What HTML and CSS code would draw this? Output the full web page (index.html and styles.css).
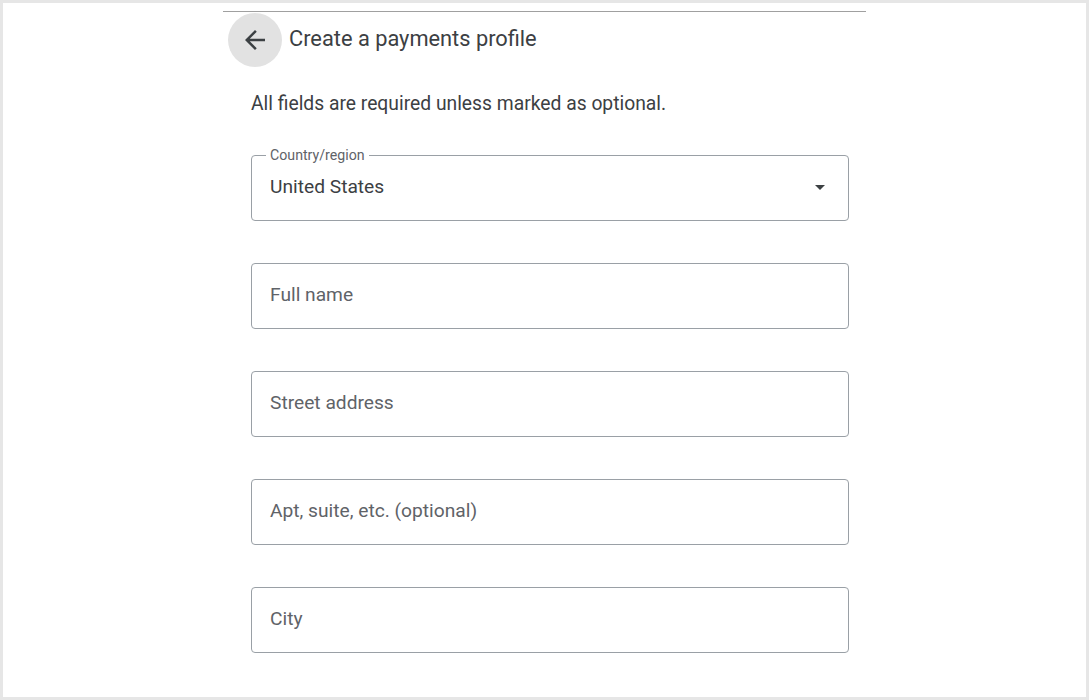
FILE: index.html
```html
<!DOCTYPE html>
<html lang="en">
<head>
<meta charset="utf-8">
<title>Create a payments profile</title>
<link rel="stylesheet" href="styles.css">
</head>
<body>
<div class="frame">
  <div class="column">
    <div class="header">
      <button class="back" aria-label="Back">
        <svg width="30" height="30" viewBox="0 0 24 24"><path d="M20 11H7.83l5.59-5.59L12 4l-8 8 8 8 1.41-1.41L7.83 13H20v-2z" fill="#3c4043"/></svg>
      </button>
      <h1 class="title">Create a payments profile</h1>
    </div>
    <div class="body">
      <p class="note">All fields are required unless marked as optional.</p>
      <div class="fields">
        <div class="field select">
          <span class="label">Country/region</span>
          <span class="value">United States</span>
          <span class="caret"></span>
        </div>
        <div class="field"><span class="placeholder">Full name</span></div>
        <div class="field"><span class="placeholder">Street address</span></div>
        <div class="field"><span class="placeholder">Apt, suite, etc. (optional)</span></div>
        <div class="field"><span class="placeholder">City</span></div>
      </div>
    </div>
  </div>
</div>
</body>
</html>
```
FILE: styles.css
```css
* { box-sizing: border-box; }
html, body { margin: 0; padding: 0; background: #fff; }
body { font-family: Roboto, "Noto Sans", Arial, sans-serif; color: #3c4043; }
.frame {
  width: 1089px;
  height: 700px;
  border: 3px solid #e6e6e6;
  background: #fff;
  padding-top: 8px;
  overflow: hidden;
}
.column {
  margin-left: 220px;
  width: 643px;
  border-top: 1px solid #a0a0a0;
}
.header {
  display: flex;
  align-items: center;
  margin-top: 1px;
  padding-left: 5px;
}
.back {
  width: 54px;
  height: 54px;
  border-radius: 50%;
  border: none;
  background: #e2e2e2;
  display: flex;
  align-items: center;
  justify-content: center;
  padding: 0;
  margin: 0;
}
.title {
  margin: 0 0 3px 7px;
  font-size: 21.8px;
  font-weight: 400;
  line-height: 28px;
  color: #3c4043;
}
.body {
  padding-left: 28px;
}
.note {
  margin: 25px 0 0 0;
  font-size: 19.3px;
  line-height: 24px;
  color: #3c4043;
}
.fields {
  display: flex;
  flex-direction: column;
  gap: 42px;
  margin-top: 39px;
  width: 598px;
}
.field {
  position: relative;
  height: 66px;
  border: 1px solid #9aa0a6;
  border-radius: 4px;
  display: flex;
  align-items: center;
  padding-left: 18px;
  padding-bottom: 3px;
  font-size: 19.2px;
}
.label {
  position: absolute;
  top: -10px;
  left: 14px;
  padding: 0 4px;
  background: #fff;
  font-size: 14.2px;
  line-height: 18px;
  color: #5f6368;
}
.value { color: #3c4043; }
.placeholder { color: #5f6368; }
.caret {
  position: absolute;
  right: 23px;
  top: 29px;
  width: 0;
  height: 0;
  border-left: 5.5px solid transparent;
  border-right: 5.5px solid transparent;
  border-top: 5.5px solid #3c4043;
}
```
